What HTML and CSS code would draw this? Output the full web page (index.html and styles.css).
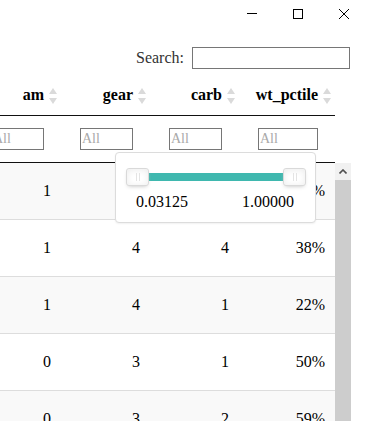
FILE: index.html
```html
<!DOCTYPE html>
<html>
<head>
<meta charset="utf-8">
<link rel="stylesheet" href="styles.css">
</head>
<body>
<div class="titlebar">
  <div class="win-btn"><svg width="10" height="10" viewBox="0 0 10 10"><line x1="0" y1="4.5" x2="10" y2="4.5" stroke="#000" stroke-width="1"/></svg></div>
  <div class="win-btn"><svg width="10" height="10" viewBox="0 0 10 10"><rect x="0.5" y="0.5" width="9" height="9" fill="none" stroke="#000" stroke-width="1"/></svg></div>
  <div class="win-btn"><svg width="10" height="10" viewBox="0 0 10 10"><path d="M0 0 L10 10 M10 0 L0 10" stroke="#000" stroke-width="1"/></svg></div>
</div>
<div class="dt">
  <div class="dt-search"><label class="search-label">Search:</label><input class="search-input" type="search"></div>
  <div class="head-clip">
    <table class="dt-table">
      <colgroup><col class="c1"><col class="c2"><col class="c3"><col class="c4"></colgroup>
      <thead>
        <tr class="head-row">
          <th>am<svg class="sort" width="8" height="16" viewBox="0 0 8 16"><path d="M4 0 L8 6 L0 6 Z" fill="#dadada"/><path d="M0 10 L8 10 L4 16 Z" fill="#dadada"/></svg></th>
          <th>gear<svg class="sort" width="8" height="16" viewBox="0 0 8 16"><path d="M4 0 L8 6 L0 6 Z" fill="#dadada"/><path d="M0 10 L8 10 L4 16 Z" fill="#dadada"/></svg></th>
          <th>carb<svg class="sort" width="8" height="16" viewBox="0 0 8 16"><path d="M4 0 L8 6 L0 6 Z" fill="#dadada"/><path d="M0 10 L8 10 L4 16 Z" fill="#dadada"/></svg></th>
          <th>wt_pctile<svg class="sort" width="8" height="16" viewBox="0 0 8 16"><path d="M4 0 L8 6 L0 6 Z" fill="#dadada"/><path d="M0 10 L8 10 L4 16 Z" fill="#dadada"/></svg></th>
        </tr>
        <tr class="filter-row">
          <td><input class="filter-input" type="search" placeholder="All"></td>
          <td><input class="filter-input" type="search" placeholder="All"></td>
          <td><input class="filter-input" type="search" placeholder="All"></td>
          <td><input class="filter-input" type="search" placeholder="All"></td>
        </tr>
      </thead>
    </table>
  </div>
  <div class="body-row">
    <div class="body-clip">
      <table class="dt-table">
        <colgroup><col class="c1"><col class="c2"><col class="c3"><col class="c4"></colgroup>
        <tbody>
          <tr class="odd"><td>1</td><td>4</td><td>4</td><td>26%</td></tr>
          <tr><td>1</td><td>4</td><td>4</td><td>38%</td></tr>
          <tr class="odd"><td>1</td><td>4</td><td>1</td><td>22%</td></tr>
          <tr><td>0</td><td>3</td><td>1</td><td>50%</td></tr>
          <tr class="odd"><td>0</td><td>3</td><td>2</td><td>59%</td></tr>
        </tbody>
      </table>
    </div>
    <div class="scrollbar">
      <div class="sb-up"><svg width="8" height="5" viewBox="0 0 8 5"><path d="M0.5 4.5 L4 1 L7.5 4.5" fill="none" stroke="#505050" stroke-width="1.6"/></svg></div>
      <div class="sb-thumb"></div>
    </div>
  </div>
</div>
<div class="popup">
  <div class="slider">
    <div class="slider-connect"></div>
    <div class="handle handle-left"></div>
    <div class="handle handle-right"></div>
  </div>
  <div class="slider-labels"><span>0.03125</span><span>1.00000</span></div>
</div>
</body>
</html>
```
FILE: styles.css
```css
html, body {
  margin: 0;
  padding: 0;
}
body {
  font-family: "Liberation Serif", "Times New Roman", serif;
  font-size: 16px;
  color: #000;
  background: #fff;
  width: 367px;
  height: 421px;
  overflow: hidden;
  position: relative;
}
.titlebar {
  display: flex;
  justify-content: flex-end;
  height: 28px;
}
.win-btn {
  width: 46px;
  height: 28px;
  display: flex;
  align-items: center;
  justify-content: center;
}
.win-btn svg { display: block; }

.dt {
  width: 351px;
}
.dt-search {
  display: flex;
  justify-content: flex-end;
  align-items: center;
  margin-top: 19px;
  margin-bottom: 8px;
  padding-right: 1px;
}
.search-label {
  color: #333;
  line-height: 18px;
}
.search-input {
  margin: 0 0 0 8px;
  width: 158px;
  height: 22px;
  box-sizing: border-box;
  border: 1px solid #767676;
  padding: 1px 2px;
  font: 14px "Liberation Serif", serif;
  outline: none;
}
.head-clip {
  width: 335px;
  overflow: hidden;
}
.dt-table {
  border-collapse: separate;
  border-spacing: 0;
  table-layout: fixed;
  width: 363px;
  margin-left: -28px;
}
.c1, .c2, .c3 { width: 89px; }
.c4 { width: 96px; }

.head-row th {
  font-weight: bold;
  text-align: right;
  padding: 9px 4px 11px 10px;
  line-height: 18px;
  border-bottom: 1px solid #111;
  white-space: nowrap;
}
.sort {
  display: inline-block;
  margin-left: 5px;
  vertical-align: -4px;
}
.filter-row td {
  padding: 12px 17px 12px 19px;
  border-bottom: 1px solid #111;
}
.filter-input {
  display: block;
  width: 100%;
  height: 22px;
  box-sizing: border-box;
  border: 1px solid #767676;
  padding: 0 1px;
  margin: 0;
  font: 14px "Liberation Serif", serif;
  background: #fff;
}
.filter-input::placeholder {
  color: #a9a9a9;
}
.body-row {
  display: flex;
  height: 258px;
}
.body-clip {
  width: 335px;
  overflow: hidden;
}
.dt-table tbody td {
  padding: 8px 10px;
  line-height: 40px;
  text-align: right;
  border-top: 1px solid #ddd;
  white-space: nowrap;
}
.dt-table tbody tr:first-child td {
  border-top: none;
}
.dt-table tbody tr.odd td {
  background: #f9f9f9;
}
.scrollbar {
  width: 16px;
  background: #f1f1f1;
  display: flex;
  flex-direction: column;
}
.sb-up {
  height: 17px;
  display: flex;
  align-items: center;
  justify-content: center;
}
.sb-up svg { display: block; }
.sb-thumb {
  flex: 1;
  background: #cdcdcd;
}

.popup {
  position: absolute;
  left: 115px;
  top: 152px;
  width: 201px;
  height: 71px;
  box-sizing: border-box;
  border: 1px solid #dcdcdc;
  border-radius: 4px;
  background: #fff;
  box-shadow: 0 1px 2px rgba(0,0,0,0.06);
  padding: 15px 9px 0 10px;
}
.slider {
  position: relative;
  height: 18px;
}
.slider-connect {
  position: absolute;
  left: 20px;
  right: 20px;
  top: 5px;
  height: 8px;
  background: #3fb8af;
}
.handle {
  position: absolute;
  top: 0;
  width: 23px;
  height: 18px;
  box-sizing: border-box;
  border: 1px solid #d9d9d9;
  border-radius: 3px;
  background: #fff;
  box-shadow: inset 0 0 1px #fff, inset 0 1px 7px #ebebeb, 0 2px 4px -2px #bbb;
}
.handle-left { left: 0; }
.handle-right { right: 0; }
.handle::before, .handle::after {
  content: "";
  position: absolute;
  top: 4px;
  width: 1px;
  height: 8px;
  background: #e4e4e4;
}
.handle::before { left: 9px; }
.handle::after { left: 12px; }
.slider-labels {
  display: flex;
  justify-content: space-between;
  padding: 0 12px 0 10px;
  margin-top: 7px;
  line-height: 18px;
}
```
